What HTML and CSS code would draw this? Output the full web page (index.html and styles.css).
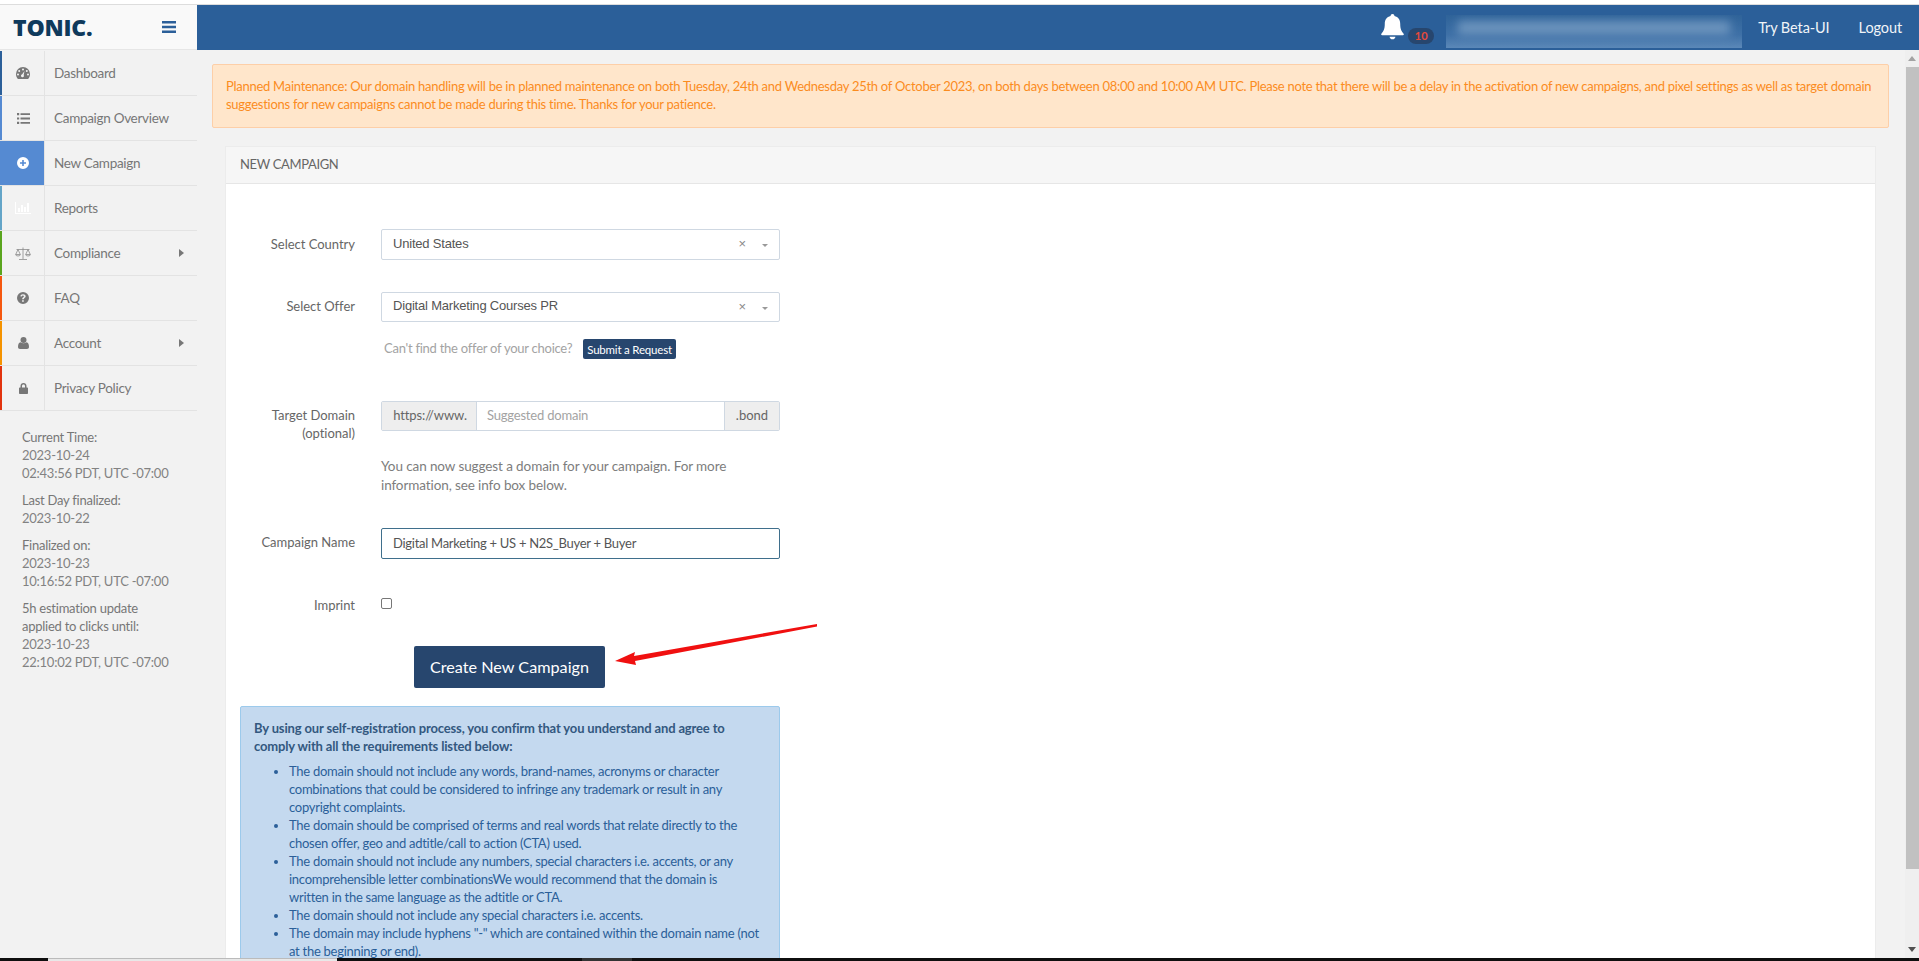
FILE: index.html
```html
<!DOCTYPE html>
<html lang="en">
<head>
    <meta charset="UTF-8">
    <title>Tonic - New Campaign</title>
    <link rel="stylesheet" href="styles.css">
</head>
<body>
    <div class="top-strip"></div>

    <header class="topbar">
        <div class="brand">
            <span class="logo">TONIC.</span>
            <svg class="burger" width="14" height="12" viewBox="0 0 14 12"><path d="M0 0h14v2.4H0zM0 4.8h14v2.4H0zM0 9.6h14V12H0z"/></svg>
        </div>
        <nav class="topnav">
            <svg class="bell" width="25" height="27" viewBox="0 0 24 28"><path d="M12 0a2 2 0 0 1 2 2.2c4 .9 6 4 6 8 0 6 1.500 8 3.500 10.300.5.700.2 1.500-.8 1.500H1.300c-1 0-1.300-.8-.8-1.500C2.500 18.200 4 16.200 4 10.200c0-4 2-7.100 6-8A2 2 0 0 1 12 0z"/><path d="M9 23.500h6c0 1.500-1.300 2.700-3 2.700s-3-1.200-3-2.700z"/></svg>
            <span class="badge">10</span>
            <div class="blurred"><div class="blurred-text"></div></div>
            <a class="toplink beta">Try Beta-UI</a>
            <a class="toplink">Logout</a>
        </nav>
    </header>

    <div class="layout">
        <aside class="sidebar">
            <ul class="menu">
                <li class="c1"><span class="ico"><svg width="14" height="12" viewBox="0 0 14 12"><path d="M7 0a7 7 0 0 1 7 7c0 1.800-.5 3.300-1.500 4.500l-.4.500H1.900l-.4-.5C.5 10.300 0 8.800 0 7a7 7 0 0 1 7-7zM7 1.500a1 1 0 1 0 0 2 1 1 0 0 0 0-2zM3.200 3a1 1 0 1 0 0 2 1 1 0 0 0 0-2zM10.800 3a1 1 0 1 0 0 2 1 1 0 0 0 0-2zM2 6.500a1 1 0 1 0 0 2 1 1 0 0 0 0-2zM12 6.500a1 1 0 1 0 0 2 1 1 0 0 0 0-2zM8.500 4L6.200 7.300a1.500 1.500 0 1 0 1.500.6z" fill-rule="evenodd"/></svg></span><a>Dashboard</a></li>
                <li class="c2"><span class="ico"><svg width="13" height="11" viewBox="0 0 13 11"><path d="M0 0h2.200v2.200H0zM3.500 .2H13v1.800H3.500zM0 4.400h2.200v2.200H0zM3.500 4.600H13v1.800H3.500zM0 8.800h2.200V11H0zM3.500 9H13v1.800H3.500z"/></svg></span><a>Campaign Overview</a></li>
                <li class="c3 active"><span class="ico"><svg width="12" height="12" viewBox="0 0 12 12"><path fill-rule="evenodd" d="M6 0a6 6 0 1 1 0 12A6 6 0 0 1 6 0zM5.200 3v2.200H3v1.600h2.200V9h1.600V6.800H9V5.200H6.800V3z"/></svg></span><a>New Campaign</a></li>
                <li class="c4"><span class="ico faint"><svg width="16" height="12" viewBox="0 0 16 12"><path d="M0 0h1v11h15v1H0zM3 6h2v4H3zM6 3h2v7H6zM9 5h2v5H9zM12 1h2v9h-2z"/></svg></span><a>Reports</a></li>
                <li class="c5"><span class="ico scale"><svg width="16" height="13" viewBox="0 0 16 13"><path fill="none" stroke="currentColor" stroke-width=".8" d="M1.500 2.500h13M8 .5v11.500M4 12.500h8M3 2.500L.7 7.500h4.600zM13 2.500l-2.300 5h4.600zM.7 7.500a2.300 1.500 0 0 0 4.600 0M10.700 7.500a2.300 1.500 0 0 0 4.600 0"/></svg></span><a>Compliance</a><i class="caret"></i></li>
                <li class="c6"><span class="ico"><svg width="12" height="12" viewBox="0 0 12 12"><path fill-rule="evenodd" d="M6 0a6 6 0 1 1 0 12A6 6 0 0 1 6 0zM5.100 8.300v1.500h1.700V8.300zM6 2.200c-1.500 0-2.500.8-2.700 2l1.500.4c.1-.6.500-1 1.100-1 .6 0 1 .3 1 .8 0 .9-1.800 1-1.800 2.900h1.700c0-1.200 1.900-1.500 1.900-3C8.700 3 7.500 2.200 6 2.200z"/></svg></span><a>FAQ</a></li>
                <li class="c7"><span class="ico"><svg width="11" height="12" viewBox="0 0 11 12"><circle cx="5.500" cy="3" r="3"/><path d="M2.500 5.300c1.700 1.200 4.300 1.200 6 0C10.300 5.500 11 7.500 11 10c0 1.300-.8 2-2 2H2c-1.200 0-2-.7-2-2 0-2.500.7-4.500 2.500-4.700z"/></svg></span><a>Account</a><i class="caret"></i></li>
                <li class="c8"><span class="ico"><svg width="9" height="11" viewBox="0 0 9 11"><path fill-rule="evenodd" d="M4.500 0C6.300 0 7.500 1.300 7.500 3v1.500H8.200c.5 0 .8.300.8.800v4.900c0 .5-.3.800-.8.800H.8c-.5 0-.8-.3-.8-.8V5.300c0-.5.300-.8.800-.8h.7V3C1.500 1.300 2.700 0 4.500 0zM4.500 1.500C3.600 1.500 3 2.100 3 3v1.500h3V3c0-.9-.6-1.500-1.500-1.500z"/></svg></span><a>Privacy Policy</a></li>
            </ul>
            <div class="times">
                <p><b>Current Time:</b><br>2023-10-24<br>02:43:56 PDT, UTC -07:00</p>
                <p><b>Last Day finalized:</b><br>2023-10-22</p>
                <p><b>Finalized on:</b><br>2023-10-23<br>10:16:52 PDT, UTC -07:00</p>
                <p><b>5h estimation update<br>applied to clicks until:</b><br>2023-10-23<br>22:10:02 PDT, UTC -07:00</p>
            </div>
        </aside>

        <main class="content">
            <div class="alert">Planned Maintenance: Our domain handling will be in planned maintenance on both Tuesday, 24th and Wednesday 25th of October 2023, on both days between 08:00 and 10:00 AM UTC. Please note that there will be a delay in the activation of new campaigns, and pixel settings as well as target domain suggestions for new campaigns cannot be made during this time. Thanks for your patience.</div>

            <section class="panel">
                <div class="panel-head">NEW CAMPAIGN</div>
                <div class="panel-body">
                    <div class="row row-country">
                        <label class="lbl">Select Country</label>
                        <div class="field select"><span>United States</span><span class="x">×</span><i class="arrow"></i></div>
                    </div>
                    <div class="row row-offer">
                        <label class="lbl">Select Offer</label>
                        <div class="field select"><span>Digital Marketing Courses PR</span><span class="x">×</span><i class="arrow"></i></div>
                    </div>
                    <div class="request">
                        <span class="request-text">Can't find the offer of your choice?</span>
                        <button class="btn-small" type="button">Submit a Request</button>
                    </div>
                    <div class="row row-domain">
                        <label class="lbl">Target Domain<br>(optional)</label>
                        <div class="group">
                            <span class="addon addon-l">https://www.</span>
                            <span class="group-input">Suggested domain</span>
                            <span class="addon addon-r">.bond</span>
                        </div>
                    </div>
                    <p class="hint">You can now suggest a domain for your campaign. For more information, see info box below.</p>
                    <div class="row row-name">
                        <label class="lbl">Campaign Name</label>
                        <input class="field name" type="text" value="Digital Marketing + US + N2S_Buyer + Buyer">
                    </div>
                    <div class="row row-imprint">
                        <label class="lbl">Imprint</label>
                        <span class="check"></span>
                    </div>
                    <div class="submit-wrap">
                        <button class="btn-create" type="button">Create New Campaign</button>
                    </div>
                    <div class="info">
                        <p><b>By using our self-registration process, you confirm that you understand and agree to comply with all the requirements listed below:</b></p>
                        <ul>
                            <li>The domain should not include any words, brand-names, acronyms or character combinations that could be considered to infringe any trademark or result in any copyright complaints.</li>
                            <li>The domain should be comprised of terms and real words that relate directly to the chosen offer, geo and adtitle/call to action (CTA) used.</li>
                            <li>The domain should not include any numbers, special characters i.e. accents, or any incomprehensible letter combinationsWe would recommend that the domain is written in the same language as the adtitle or CTA.</li>
                            <li>The domain should not include any special characters i.e. accents.</li>
                            <li>The domain may include hyphens "-" which are contained within the domain name (not at the beginning or end).</li>
                        </ul>
                    </div>
                </div>
            </section>

            <!-- annotation on top of the screenshot -->
            <svg class="red-arrow" width="220" height="46" viewBox="0 0 220 46"><path d="M206 4L23 36l1-4-20 9 21 4-1-4L206 6.500z" fill="#f01010"/></svg>
        </main>

        <div class="scrollbar">
            <span class="sb-up"></span>
            <span class="sb-thumb"></span>
            <span class="sb-down"></span>
        </div>
    </div>

    <div class="taskbar"><span class="tb-black"></span><span class="tb-light"></span><span class="tb-dark"></span><span class="tb-mid"></span><span class="tb-rest"></span></div>
</body>
</html>
```

FILE: styles.css
```css
* {
    box-sizing: border-box;
}
html, body {
    height: 100%;
}
body {
    margin: 0;
    font-family: Lato, Arial, sans-serif;
    font-size: 13px;
    line-height: 18px;
    color: #777;
    background-color: #f2f2f2;
    display: flex;
    flex-direction: column;
    overflow: hidden;
}
.top-strip {
    height: 5px;
    flex: none;
    background-color: #fff;
    border-bottom: 1px solid #ddd;
}

/* header */
.topbar {
    height: 45px;
    flex: none;
    display: flex;
    background-color: #2b5f99;
}
.brand {
    width: 197px;
    display: flex;
    align-items: center;
    justify-content: space-between;
    padding: 0 21px 0 13px;
    background-color: #f9f9f9;
    border-bottom: 1px solid #e6e6e6;
}
.logo {
    font-family: "Open Sans", Arial, sans-serif;
    font-weight: 800;
    font-size: 23px;
    letter-spacing: -0.2px;
    color: #0f3a5c;
}
.burger {
    fill: #2b5f99;
}
.topnav {
    flex: 1;
    display: flex;
    align-items: center;
    justify-content: flex-end;
    padding-right: 17px;
    color: #f2f2f2;
}
.bell {
    fill: #fff;
}
.badge {
    width: 26px;
    height: 16px;
    margin: 17px 12px 0 3px;
    border-radius: 8px;
    background-color: #27466e;
    color: #e84a3a;
    font-size: 11px;
    line-height: 16px;
    font-weight: 700;
    text-align: center;
}
.blurred {
    width: 296px;
    height: 33px;
    margin-top: 8px;
    padding-top: 6px;
    overflow: hidden;
    background: linear-gradient(#2f6399, #3f71a7 60%, #5b88b8);
}
.blurred-text {
    height: 14px;
    margin: 0 12px;
    background-color: #6b93bd;
    filter: blur(5px);
}
.toplink {
    font-size: 14.500px;
    letter-spacing: -0.1px;
    color: #f0f4f8;
}
.beta {
    margin: 0 29px 0 16px;
}

/* body of the page */
.layout {
    flex: 1;
    min-height: 0;
    display: flex;
}
.sidebar {
    width: 197px;
    flex: none;
}
.menu {
    list-style: none;
    margin: 1px 0 0;
    padding: 0;
}
.menu li {
    height: 45px;
    display: flex;
    align-items: center;
    position: relative;
    border-bottom: 1px solid #e3e3e3;
}
.menu a {
    padding-left: 9px;
    font-size: 13.500px;
    letter-spacing: -0.3px;
    color: #777;
}
.ico {
    width: 45px;
    height: 100%;
    flex: none;
    display: flex;
    align-items: center;
    justify-content: center;
    color: #777;
    fill: #777;
    border-left: 2px solid #2b5f99;
    border-right: 1px solid #e3e3e3;
}
.faint {
    color: #fff;
    fill: #fff;
}
.scale {
    color: #8c8c8c;
}
.c2 .ico { border-left-color: #558ad2; }
.c3 .ico { border-left-color: #558ad2; background-color: #558ad2; fill: #fff; }
.c4 .ico { border-left-color: #64a5c8; }
.c5 .ico { border-left-color: #5aa51e; }
.c6 .ico { border-left-color: #f5570f; }
.c7 .ico { border-left-color: #f59300; }
.c8 .ico { border-left-color: #e2330e; }
.caret {
    position: absolute;
    right: 13px;
    top: 18px;
    border-left: 5px solid #777;
    border-top: 4px solid transparent;
    border-bottom: 4px solid transparent;
}
.times {
    padding: 17px 0 0 22px;
    font-size: 13px;
    letter-spacing: -0.25px;
    color: #828282;
}
.times p {
    margin: 0 0 9px;
}
.times b {
    font-weight: 400;
    color: #777;
}

.content {
    flex: 1;
    min-width: 0;
    position: relative;
    overflow: hidden;
    padding: 14px 0 0 15px;
}
.alert {
    width: 1677px;
    height: 64px;
    padding: 12px 12px 12px 13px;
    background-color: #ffe6cb;
    border: 1px solid #fdcfa8;
    border-radius: 2px;
    color: #fb8c1e;
    letter-spacing: -0.27px;
}
.panel {
    width: 1651px;
    margin: 18px 0 0 13px;
    background-color: #fff;
    border: 1px solid #ececec;
    border-bottom: 0;
}
.panel-head {
    height: 37px;
    padding: 8px 14px;
    background-color: #f6f6f6;
    border-bottom: 1px solid #e6e6e6;
    color: #666;
    font-size: 13px;
    letter-spacing: -0.35px;
}
.panel-body {
    padding: 45px 0 0 14px;
}
.row {
    display: flex;
    align-items: flex-start;
}
.lbl {
    width: 115px;
    flex: none;
    margin-right: 26px;
    padding-top: 6px;
    text-align: right;
    color: #666;
    letter-spacing: -0.02px;
}
.field {
    width: 399px;
    height: 31px;
    background-color: #fff;
    border: 1px solid #cfd8e2;
    border-radius: 2px;
}
.select {
    display: flex;
    align-items: center;
    padding: 0 11px 2px;
    position: relative;
    font-family: "Liberation Sans", Arial, sans-serif;
    font-size: 13px;
    letter-spacing: -0.2px;
    color: #555;
}
.x {
    position: absolute;
    right: 33px;
    top: 5px;
    color: #888;
}
.arrow {
    position: absolute;
    right: 11px;
    top: 14px;
    border-top: 3px solid #999;
    border-left: 3px solid transparent;
    border-right: 3px solid transparent;
}
.row-offer {
    margin-top: 32px;
}
.row-offer .field {
    height: 30px;
}
.row-offer .lbl {
    padding-top: 5px;
}
.request {
    display: flex;
    align-items: center;
    margin: 17px 0 0 144px;
    height: 20px;
    color: #a3a3a3;
    letter-spacing: -0.25px;
}
.request-text {
    margin-top: -3px;
}
.btn-small {
    margin-left: 11px;
    height: 20px;
    padding: 0 4px;
    border: 0;
    border-radius: 2px;
    background-color: #27466e;
    color: #fff;
    font-family: Lato, Arial, sans-serif;
    font-size: 11.500px;
    letter-spacing: -0.2px;
}
.row-domain {
    margin-top: 42px;
}
.row-domain .lbl,
.row-name .lbl {
    padding-top: 5px;
}
.group {
    width: 399px;
    height: 30px;
    display: flex;
    align-items: stretch;
    border: 1px solid #cfd8e2;
    border-radius: 2px;
}
.addon {
    display: flex;
    align-items: center;
    justify-content: center;
    padding-bottom: 2px;
    background-color: #eee;
    color: #666;
}
.addon-l {
    width: 95px;
    flex: none;
    padding-left: 2px;
    border-right: 1px solid #cfd8e2;
    letter-spacing: -0.1px;
}
.addon-r {
    width: 55px;
    flex: none;
    border-left: 1px solid #cfd8e2;
}
.group-input {
    flex: 1;
    display: flex;
    align-items: center;
    padding: 0 0 2px 10px;
    color: #a3a3a3;
    letter-spacing: -0.2px;
}
.hint {
    width: 399px;
    margin: 15px 0 0 141px;
    font-size: 13.500px;
    line-height: 19px;
    letter-spacing: -0.1px;
    color: #7d7d7d;
}
.row-name {
    margin-top: 33px;
}
.name {
    height: 31px;
    padding: 0 11px 2px;
    border-color: #3f6f8c;
    font-family: Lato, Arial, sans-serif;
    font-size: 13px;
    letter-spacing: -0.28px;
    color: #555;
    outline: none;
}
.row-imprint {
    margin-top: 31px;
}
.check {
    width: 11px;
    height: 11px;
    margin-top: 8px;
    background-color: #fff;
    border: 1px solid #777;
    border-radius: 2px;
}
.submit-wrap {
    margin: 32px 0 0 174px;
}
.btn-create {
    width: 191px;
    height: 42px;
    padding: 0 0 2px;
    border: 0;
    border-radius: 2px;
    background-color: #27466e;
    color: #fff;
    font-family: Lato, Arial, sans-serif;
    font-size: 16.200px;
}
.info {
    width: 540px;
    margin-top: 18px;
    padding: 12px 20px 20px 13px;
    background-color: #c4d9ef;
    border: 1px solid #9ccaec;
    border-radius: 2px;
    color: #2b5f99;
    letter-spacing: -0.27px;
}
.info p {
    margin: 0;
}
.info b {
    font-weight: 700;
    color: #33587f;
    letter-spacing: -0.15px;
}
.info ul {
    margin: 7px 0 0;
    padding-left: 35px;
}

.red-arrow {
    position: absolute;
    left: 414px;
    top: 570px;
}

.scrollbar {
    width: 14px;
    flex: none;
    display: flex;
    flex-direction: column;
    align-items: center;
    background-color: #efefef;
}
.sb-up {
    margin-top: 6px;
    border-bottom: 5px solid #a3a3a3;
    border-left: 4px solid transparent;
    border-right: 4px solid transparent;
}
.sb-thumb {
    width: 13px;
    height: 802px;
    margin-top: 6px;
    background-color: #c1c1c1;
}
.sb-down {
    margin-top: auto;
    margin-bottom: 6px;
    border-top: 5px solid #505050;
    border-left: 4px solid transparent;
    border-right: 4px solid transparent;
}

.taskbar {
    height: 3px;
    flex: none;
    display: flex;
    background-color: #0f0f0f;
}
.tb-black { width: 48px; }
.tb-light { width: 289px; background-color: #e8e8e8; border-top: 1px solid #bbb; }
.tb-dark { width: 245px; }
.tb-mid { width: 50px; background-color: #333; }
.tb-rest { flex: 1; }
```
